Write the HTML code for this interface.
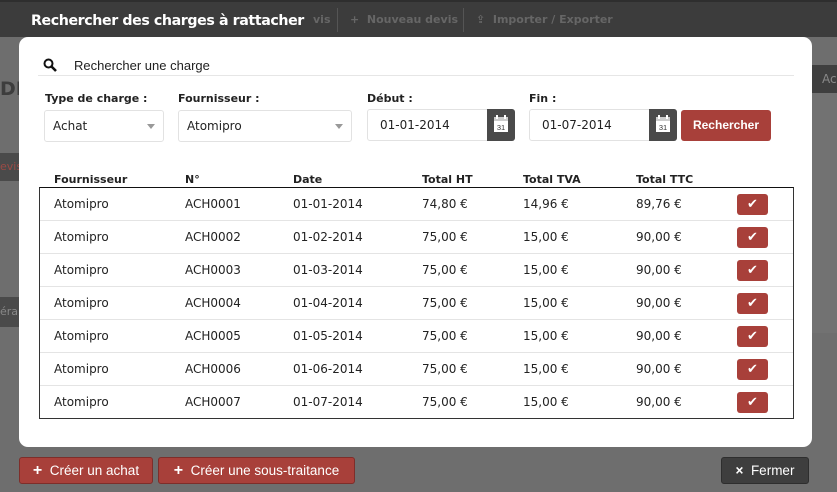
<!DOCTYPE html>
<html><head><meta charset="utf-8"><style>
*{box-sizing:border-box;margin:0;padding:0}
body{width:837px;height:492px;overflow:hidden;background:#6e6e6e;font-family:"DejaVu Sans","Liberation Sans",sans-serif;position:relative;color:#222}
.abs{position:absolute}
.top{left:0;top:0;width:837px;height:37px;background:#3c3c3c;border-top:2px solid #2e2e2e}
.navtxt{top:13px;font-size:11px;color:#666;font-weight:bold}
.title{left:31px;top:13px;font-size:14.2px;font-weight:bold;color:#fff;font-family:"DejaVu Sans",sans-serif;letter-spacing:-0.4px}
.modal{left:19px;top:37px;width:793px;height:410px;background:#fff;border-radius:9px}
.lbl{font-size:11px;font-weight:bold;color:#222}
.inp{height:32px;border:1px solid #e2e2e2;border-radius:3px;background:#fff;font-size:12px;line-height:30px;padding-left:8px;color:#222}
.arrow{position:absolute;right:8px;top:13px;width:0;height:0;border-left:4px solid transparent;border-right:4px solid transparent;border-top:5px solid #999}
.cal{position:absolute;top:-1px;right:-1px;width:28px;height:32px;background:#4a4a4a;border-radius:0 3px 3px 0}
.btnred{background:#a8403a;color:#fff;border-radius:3px;font-weight:bold}
.th{top:173px;font-size:11px;font-weight:bold}
.tbl{left:39px;top:187px;width:755px;height:232px;border:1px solid #333;border-top:1.5px solid #111}
.row{position:absolute;left:0;width:753px;height:33px;border-bottom:1px solid #e4e4e4;font-size:12px}
.row span{position:absolute;top:9px}
.chk{position:absolute;left:697px;top:6px;width:31px;height:21px;background:#a8403a;border-radius:3px;color:#fff;font-size:13px;text-align:center;line-height:21px;font-style:normal}
.bot{top:457px;height:27px;border-radius:3px;font-size:13.5px;color:#fff;line-height:25px;text-align:center;font-family:"Liberation Sans",sans-serif}
</style></head><body>
<div class="abs top"></div>
<div class="abs navtxt" style="left:313px">vis</div>
<div class="abs" style="left:337px;top:8px;width:1px;height:24px;background:#555"></div>
<div class="abs navtxt" style="left:350px">+ &nbsp;Nouveau devis</div>
<div class="abs" style="left:463px;top:8px;width:1px;height:24px;background:#555"></div>
<div class="abs navtxt" style="left:476px">⇪ &nbsp;Importer / Exporter</div>
<div class="abs" style="left:0;top:78px;font-size:19px;font-weight:bold;color:#3d3d3d">DI</div>
<div class="abs" style="left:0;top:153px;width:19px;height:28px;background:#4a4a4a;color:#9b4a45;font-size:11px;line-height:28px">evis</div>
<div class="abs" style="left:0;top:297px;width:19px;height:30px;background:#4a4a4a;color:#888;font-size:11px;line-height:30px">éra</div>
<div class="abs" style="left:812px;top:65px;width:25px;height:28px;background:#3f3f3f;color:#888;font-size:12px;line-height:28px;padding-left:10px">Ac</div>
<div class="abs" style="left:812px;top:93px;width:25px;height:240px;background:#727272"></div>
<div class="abs title">Rechercher des charges à rattacher</div>
<div class="abs modal"></div>
<svg class="abs" style="left:43px;top:58px" width="14" height="14" viewBox="0 0 14 14"><circle cx="5.5" cy="5.5" r="4" fill="none" stroke="#111" stroke-width="2"/><line x1="8.5" y1="8.5" x2="13" y2="13" stroke="#111" stroke-width="2.6"/></svg>
<div class="abs" style="left:74px;top:58px;font-size:13px;font-family:'Liberation Sans',sans-serif">Rechercher une charge</div>
<div class="abs" style="left:38px;top:75px;width:756px;height:1px;background:#e6e6e6"></div>
<div class="abs lbl" style="left:45px;top:92px">Type de charge :</div>
<div class="abs lbl" style="left:178px;top:92px">Fournisseur :</div>
<div class="abs lbl" style="left:367px;top:92px">Début :</div>
<div class="abs lbl" style="left:529px;top:92px">Fin :</div>
<div class="abs inp" style="left:44px;top:110px;width:120px">Achat<i class="arrow"></i></div>
<div class="abs inp" style="left:178px;top:110px;width:174px">Atomipro<i class="arrow"></i></div>
<div class="abs inp" style="left:367px;top:109px;width:148px;padding-left:12px">01-01-2014<div class="cal"><svg width="28" height="32"><rect x="7" y="8" width="14" height="15" fill="#fff"/><rect x="7" y="8" width="14" height="4" fill="#ccc"/><rect x="9" y="6" width="2" height="4" fill="#fff"/><rect x="17" y="6" width="2" height="4" fill="#fff"/><text x="14" y="21" font-size="7.5" text-anchor="middle" fill="#333" font-family="Liberation Sans">31</text></svg></div></div>
<div class="abs inp" style="left:529px;top:109px;width:148px;padding-left:12px">01-07-2014<div class="cal"><svg width="28" height="32"><rect x="7" y="8" width="14" height="15" fill="#fff"/><rect x="7" y="8" width="14" height="4" fill="#ccc"/><rect x="9" y="6" width="2" height="4" fill="#fff"/><rect x="17" y="6" width="2" height="4" fill="#fff"/><text x="14" y="21" font-size="7.5" text-anchor="middle" fill="#333" font-family="Liberation Sans">31</text></svg></div></div>
<div class="abs btnred" style="left:681px;top:110px;width:90px;height:31px;font-size:12px;line-height:31px;text-align:center;font-family:'Liberation Sans',sans-serif">Rechercher</div>
<div class="abs th" style="left:54px">Fournisseur</div>
<div class="abs th" style="left:185px">N°</div>
<div class="abs th" style="left:293px">Date</div>
<div class="abs th" style="left:422px">Total HT</div>
<div class="abs th" style="left:523px">Total TVA</div>
<div class="abs th" style="left:636px">Total TTC</div>
<div class="abs tbl">
<div class="row" style="top:0"><span style="left:14px">Atomipro</span><span style="left:145px">ACH0001</span><span style="left:253px">01-01-2014</span><span style="left:382px">74,80 €</span><span style="left:483px">14,96 €</span><span style="left:596px">89,76 €</span><i class="chk">✔</i></div>
<div class="row" style="top:33px"><span style="left:14px">Atomipro</span><span style="left:145px">ACH0002</span><span style="left:253px">01-02-2014</span><span style="left:382px">75,00 €</span><span style="left:483px">15,00 €</span><span style="left:596px">90,00 €</span><i class="chk">✔</i></div>
<div class="row" style="top:66px"><span style="left:14px">Atomipro</span><span style="left:145px">ACH0003</span><span style="left:253px">01-03-2014</span><span style="left:382px">75,00 €</span><span style="left:483px">15,00 €</span><span style="left:596px">90,00 €</span><i class="chk">✔</i></div>
<div class="row" style="top:99px"><span style="left:14px">Atomipro</span><span style="left:145px">ACH0004</span><span style="left:253px">01-04-2014</span><span style="left:382px">75,00 €</span><span style="left:483px">15,00 €</span><span style="left:596px">90,00 €</span><i class="chk">✔</i></div>
<div class="row" style="top:132px"><span style="left:14px">Atomipro</span><span style="left:145px">ACH0005</span><span style="left:253px">01-05-2014</span><span style="left:382px">75,00 €</span><span style="left:483px">15,00 €</span><span style="left:596px">90,00 €</span><i class="chk">✔</i></div>
<div class="row" style="top:165px"><span style="left:14px">Atomipro</span><span style="left:145px">ACH0006</span><span style="left:253px">01-06-2014</span><span style="left:382px">75,00 €</span><span style="left:483px">15,00 €</span><span style="left:596px">90,00 €</span><i class="chk">✔</i></div>
<div class="row" style="top:198px;border-bottom:none"><span style="left:14px">Atomipro</span><span style="left:145px">ACH0007</span><span style="left:253px">01-07-2014</span><span style="left:382px">75,00 €</span><span style="left:483px">15,00 €</span><span style="left:596px">90,00 €</span><i class="chk">✔</i></div>
</div>
<div class="abs bot" style="left:19px;width:134px;background:#a8403a;border:1px solid #7e2e2a"><b style="font-size:16px">+</b>&nbsp; Créer un achat</div>
<div class="abs bot" style="left:158px;width:197px;background:#a8403a;border:1px solid #7e2e2a"><b style="font-size:16px">+</b>&nbsp; Créer une sous-traitance</div>
<div class="abs bot" style="left:721px;width:88px;background:#3e3e3e;border:1px solid #2e2e2e"><b>×</b>&nbsp; Fermer</div>
</body></html>
